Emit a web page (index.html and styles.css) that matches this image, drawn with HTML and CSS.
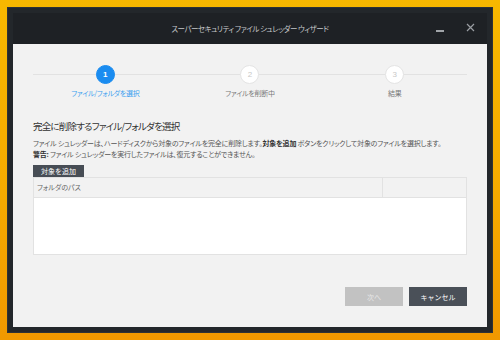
FILE: index.html
```html
<!DOCTYPE html>
<html lang="ja">
<head>
    <meta charset="UTF-8">
    <title>スーパーセキュリティ ファイル シュレッダー ウィザード</title>
    <link rel="stylesheet" href="styles.css">
</head>
<body>
    <div class="window">
        <!-- Title bar -->
        <div class="titlebar">
            <span class="title">スーパーセキュリティ ファイル シュレッダー ウィザード</span>
            <div class="controls">
                <span class="ctl min"></span>
                <svg class="ctl close" width="9" height="9" viewBox="0 0 9 9">
                    <path d="M1 1 L8 8 M8 1 L1 8" stroke="#9a9ea3" stroke-width="1.2"/>
                </svg>
            </div>
        </div>

        <div class="content">
            <!-- Steps -->
            <div class="steps">
                <div class="step active">
                    <span class="num">1</span>
                    <span class="label">ファイル/フォルダを選択</span>
                </div>
                <div class="step">
                    <span class="num">2</span>
                    <span class="label">ファイルを削断中</span>
                </div>
                <div class="step">
                    <span class="num">3</span>
                    <span class="label">結果</span>
                </div>
            </div>

            <h1 class="heading">完全に削除するファイル/フォルダを選択</h1>
            <p class="desc">ファイル シュレッダーは、ハードディスクから対象のファイルを完全に削除します。<b>対象を追加</b> ボタンをクリックして対象のファイルを選択します。</p>
            <p class="desc"><b>警告:</b> ファイル シュレッダーを実行したファイルは、復元することができません。</p>

            <button class="add-btn">対象を追加</button>
            <div class="table">
                <div class="thead">
                    <span class="col-path">フォルダのパス</span>
                    <span class="col-extra"></span>
                </div>
                <div class="tbody"></div>
            </div>

            <div class="footer">
                <button class="btn next" disabled>次へ</button>
                <button class="btn cancel">キャンセル</button>
            </div>
        </div>
    </div>
</body>
</html>
```

FILE: styles.css
```css
* {
    box-sizing: border-box;
    margin: 0;
    padding: 0;
}
body {
    width: 500px;
    height: 340px;
    overflow: hidden;
    background: linear-gradient(180deg, #f8b800 0%, #f5a900 60%, #f09800 100%);
    font-family: "Noto Sans CJK JP", "Noto Sans", sans-serif;
    font-feature-settings: "palt";
    padding: 7px;
}
.window {
    width: 486px;
    height: 326px;
    background-color: #23272b;
    border: 1px solid #2e3236;
    padding: 0 5px 5px;
    display: flex;
    flex-direction: column;
}
.titlebar {
    height: 36px;
    padding-top: 5px;
    display: flex;
    align-items: center;
    justify-content: center;
    position: relative;
    background: linear-gradient(180deg, #23272b 0 5px, #1e2125 5px);
}
.title {
    color: #c4c6c9;
    font-size: 7.5px;
    letter-spacing: -0.5px;
}
.controls {
    position: absolute;
    right: 12px;
    top: 15px;
    display: flex;
    align-items: center;
    gap: 22px;
}
.ctl.min {
    width: 8px;
    height: 2px;
    margin-top: 7px;
    background-color: #a0a4a8;
}
.content {
    flex: 1;
    background-color: #f2f2f2;
    padding: 0 20px;
    display: flex;
    flex-direction: column;
}
.steps {
    display: grid;
    grid-template-columns: repeat(3, 1fr);
    margin-top: 21px;
    position: relative;
}
.steps::before {
    content: "";
    position: absolute;
    left: 0;
    right: 0;
    top: 9px;
    height: 1px;
    background-color: #e2e2e2;
}
.step {
    display: flex;
    flex-direction: column;
    align-items: center;
    position: relative;
}
.step .num {
    width: 19px;
    height: 19px;
    border-radius: 50%;
    background-color: #fff;
    border: 1px solid #e4e4e4;
    color: #c8c8c8;
    font-family: "Liberation Sans", sans-serif;
    font-size: 8px;
    display: flex;
    align-items: center;
    justify-content: center;
}
.step .label {
    margin-top: 4px;
    font-size: 7px;
    color: #7a7a7a;
    letter-spacing: -0.3px;
}
.step.active .num {
    background-color: #1a8cf0;
    border-color: #1a8cf0;
    color: #fff;
    font-weight: bold;
}
.step.active .label {
    color: #3c9ff0;
}
.heading {
    margin-top: 21px;
    font-size: 9.5px;
    font-weight: normal;
    color: #333;
    letter-spacing: -0.8px;
}
.desc {
    font-size: 7px;
    color: #555;
    line-height: 11px;
    letter-spacing: -0.2px;
    white-space: nowrap;
}
.heading + .desc {
    margin-top: 5px;
}
.desc b {
    color: #333;
}
.add-btn {
    align-self: flex-start;
    margin-top: 5px;
    width: 51px;
    height: 12px;
    border: none;
    background-color: #474d55;
    color: #fff;
    font-family: inherit;
    font-size: 7px;
    line-height: 12px;
}
.table {
    height: 78px;
    border: 1px solid #e2e2e2;
    background-color: #fff;
    display: flex;
    flex-direction: column;
}
.thead {
    height: 20px;
    display: flex;
    background-color: #f2f2f2;
    border-bottom: 1px solid #e2e2e2;
}
.col-path {
    flex: 1;
    font-size: 7px;
    color: #666;
    padding-left: 3px;
    line-height: 19px;
    border-right: 1px solid #e2e2e2;
}
.col-extra {
    width: 83px;
}
.tbody {
    flex: 1;
}
.footer {
    margin-top: auto;
    margin-bottom: 21px;
    display: flex;
    justify-content: flex-end;
    gap: 6px;
}
.btn {
    width: 58px;
    height: 19px;
    border: none;
    color: #fff;
    font-family: inherit;
    font-size: 7px;
}
.btn.next {
    background-color: #c2c2c2;
    color: #e8e8e8;
}
.btn.cancel {
    background-color: #4a5058;
}
```
